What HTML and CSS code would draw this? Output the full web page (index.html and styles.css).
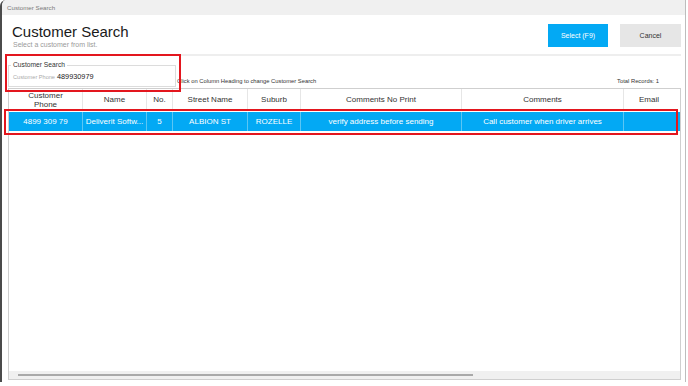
FILE: index.html
```html
<!DOCTYPE html>
<html lang="en">
<head>
<meta charset="utf-8">
<title>Customer Search</title>
<link rel="stylesheet" href="styles.css">
</head>
<body>
<div class="window">
  <div class="titlebar">Customer Search</div>
  <div class="header">
    <div class="heading">
      <div class="title">Customer Search</div>
      <div class="subtitle">Select a customer from list.</div>
    </div>
    <div class="actions">
      <button class="btn btn-primary">Select (F9)</button>
      <button class="btn btn-secondary">Cancel</button>
    </div>
  </div>
  <div class="divider"></div>
  <div class="filters">
    <fieldset class="group">
      <legend>Customer Search</legend>
      <div class="field"><span class="label">Customer Phone</span><span class="value">489930979</span></div>
    </fieldset>
    <div class="hint-row">
      <span class="hint">Click on Column Heading to change Customer Search</span>
      <span class="total">Total Records: 1</span>
    </div>
  </div>
  <div class="grid">
    <div class="grid-head">
      <div class="cell c-phone">Customer<br>Phone</div>
      <div class="cell c-name">Name</div>
      <div class="cell c-no">No.</div>
      <div class="cell c-street">Street Name</div>
      <div class="cell c-suburb">Suburb</div>
      <div class="cell c-cnp">Comments No Print</div>
      <div class="cell c-comments">Comments</div>
      <div class="cell c-email last">Email</div>
    </div>
    <div class="grid-body">
      <div class="grid-row selected">
        <div class="cell c-phone">4899 309 79</div>
        <div class="cell c-name">Deliverit Softw...</div>
        <div class="cell c-no">5</div>
        <div class="cell c-street">ALBION ST</div>
        <div class="cell c-suburb">ROZELLE</div>
        <div class="cell c-cnp">verify address before sending</div>
        <div class="cell c-comments">Call customer when driver arrives</div>
        <div class="cell c-email last"></div>
      </div>
    </div>
    <div class="hscroll"><div class="thumb"></div></div>
  </div>
</div>
<div class="mark mark-search"></div>
<div class="mark mark-row"></div>
</body>
</html>
```

FILE: styles.css
```css
* { box-sizing: border-box; }

html, body {
  margin: 0;
  padding: 0;
}

body {
  width: 688px;
  height: 386px;
  overflow: hidden;
  position: relative;
  background: #ffffff;
  font-family: "Liberation Sans", Arial, sans-serif;
  color: #333;
}

.window {
  width: 686px;
  height: 382px;
  border-left: 2px solid #4b4b4b;
  border-right: 1px solid #bdbdbd;
  border-top-left-radius: 6px;
  display: flex;
  flex-direction: column;
  background: #fff;
  overflow: hidden;
}

.titlebar {
  height: 15px;
  line-height: 15px;
  padding-left: 5px;
  background: #f0f0f0;
  font-size: 6.2px;
  color: #7a7a7a;
}

.header {
  display: flex;
  justify-content: space-between;
  align-items: flex-start;
  height: 39px;
  padding: 9px 4px 7px 10px;
}

.heading {
  margin-top: -1px;
}

.title {
  font-size: 15px;
  line-height: 17px;
  color: #1a1a1a;
}

.subtitle {
  font-size: 7px;
  line-height: 9px;
  color: #9a9a9a;
  margin-left: 1px;
}

.actions {
  display: flex;
  gap: 12px;
}

.btn {
  height: 23px;
  border: none;
  padding: 0;
  font-family: "Liberation Sans", Arial, sans-serif;
  font-size: 7px;
}

.btn-primary {
  width: 60px;
  background: #03a9f4;
  color: #ffffff;
}

.btn-secondary {
  width: 61px;
  background: #e6e6e6;
  color: #333;
}

.divider {
  height: 2px;
  margin: 0 4px 0 6px;
  background: #eeeeee;
}

.filters {
  height: 32px;
  display: flex;
  align-items: flex-end;
  padding-left: 6px;
}

.group {
  width: 168px;
  margin: 0 0 1px 0;
  padding: 0 2px 4px 4px;
  border: 1px solid #dcdcdc;
  min-width: 0;
}

.group legend {
  padding: 0 2px;
  margin-left: -2px;
  font-size: 6.7px;
  line-height: 8px;
  color: #333;
}

.field {
  line-height: 10px;
  white-space: nowrap;
}

.label {
  font-size: 5.6px;
  color: #aaaaaa;
}

.value {
  font-size: 7.3px;
  color: #222;
  margin-left: 2px;
}

.hint-row {
  flex: 1;
  display: flex;
  justify-content: space-between;
  margin: 0 26px 3px 1px;
  font-size: 5.8px;
  line-height: 8px;
  color: #333;
  white-space: nowrap;
}

.grid {
  height: 292px;
  margin: 0 4px 0 6px;
  border: 1px solid #cfcfcf;
  display: flex;
  flex-direction: column;
}

.grid-head {
  height: 21px;
  display: flex;
}

.grid-head .cell {
  display: flex;
  align-items: center;
  justify-content: center;
  text-align: center;
  font-size: 8px;
  line-height: 9px;
  color: #333;
  border-right: 1px solid #e6e6e6;
}

.grid-body {
  flex: 1;
  padding-top: 2px;
}

.grid-row {
  display: flex;
  height: 19px;
}

.grid-row.selected {
  background: #03a9f4;
}

.grid-row .cell {
  font-size: 8px;
  line-height: 19px;
  color: #ffffff;
  text-align: center;
  white-space: nowrap;
  overflow: hidden;
  text-overflow: ellipsis;
  padding: 0 2px;
  border-right: 1px solid #5cc6f4;
}

.cell.last { border-right: none; }

.c-phone { width: 74px; }
.c-name { width: 64px; }
.c-no { width: 26px; }
.c-street { width: 75px; }
.c-suburb { width: 53px; }
.c-cnp { width: 161px; }
.c-comments { width: 162px; }
.c-email { width: 50px; }

.hscroll {
  height: 8px;
  background: #f0f0f0;
  padding-top: 3px;
}

.thumb {
  width: 455px;
  height: 2px;
  margin-left: 9px;
  background: #a9a9a9;
}

.mark {
  position: absolute;
  border: 2px solid #e3161e;
}

.mark-search {
  left: 5px;
  top: 54px;
  width: 176px;
  height: 38px;
}

.mark-row {
  left: 4px;
  top: 109px;
  width: 674px;
  height: 26px;
}
```
